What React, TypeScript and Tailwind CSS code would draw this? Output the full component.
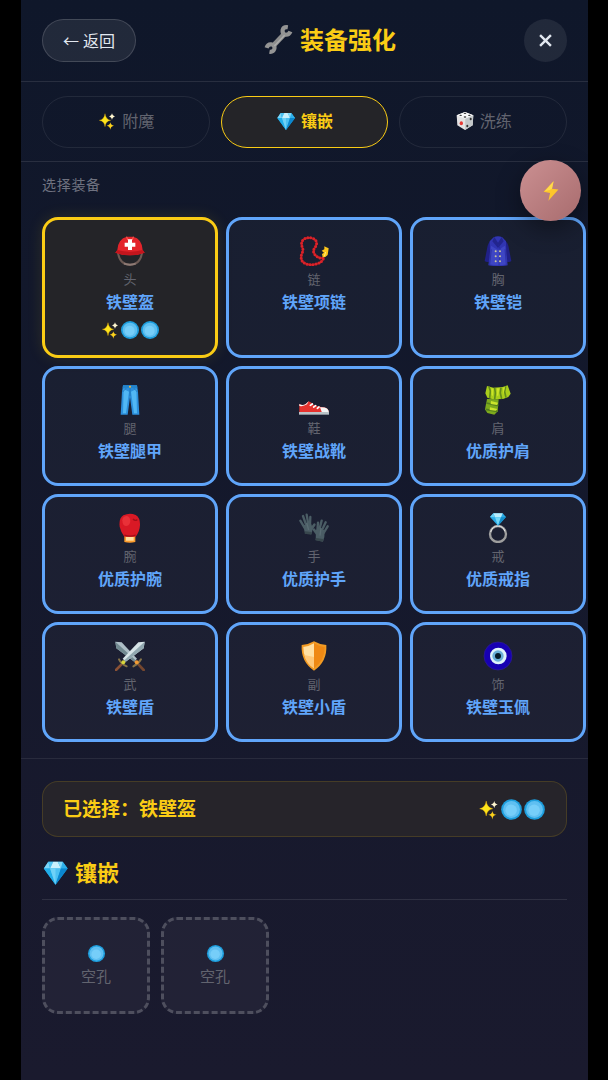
import { useState, type ReactNode } from "react";

function Sparkles({ className }: { className: string }) {
  return (
    <svg viewBox="0 0 60 60" className={className} aria-hidden="true">
      <path d="M24 8Q26 25 41 28Q26 30 24 47Q22 30 7 28Q22 25 24 8Z" fill="#fde41c" stroke="#f4b400" strokeWidth="1" />
      <path d="M45 7Q46 15 54 17Q46 18 45 27Q44 18 36 17Q44 15 45 7Z" fill="#fff6cf" />
      <path d="M40 34Q41 43 51 44Q41 45 40 56Q39 45 29 44Q39 43 40 34Z" fill="#fcd21c" />
    </svg>
  );
}

function Gem({ className }: { className: string }) {
  return (
    <svg viewBox="0 0 60 60" className={className} aria-hidden="true">
      <path d="M14 6H46L57 21L30 57L4 21Z" fill="#1ea7e8" />
      <path d="M14 6L4 21H18Z" fill="#7fd6f7" />
      <path d="M14 6L18 21L25 6Z" fill="#4cc3f2" />
      <path d="M25 6L18 21H42L35 6Z" fill="#c9f1fd" />
      <path d="M46 6L57 21H42Z" fill="#2fb0ea" />
      <path d="M35 6L42 21L46 6Z" fill="#80d8f7" />
      <path d="M4 21H18L30 57Z" fill="#21aeea" />
      <path d="M18 21H42L30 57Z" fill="#4cc1f2" />
      <path d="M42 21H57L30 57Z" fill="#0b87cf" />
      <path d="M18 21H30V57Z" fill="#6fd2f7" />
    </svg>
  );
}

function Socket({ className }: { className: string }) {
  return (
    <svg viewBox="0 0 60 60" className={className} aria-hidden="true">
      <circle cx="30" cy="30" r="27" fill="#1d9edd" />
      <circle cx="30" cy="30" r="22" fill="#5fbff1" />
      <circle cx="29" cy="32" r="15" fill="#76cef9" />
    </svg>
  );
}

function Dice({ className }: { className: string }) {
  return (
    <svg viewBox="0 0 60 60" className={className} aria-hidden="true">
      <path d="M30 3L55 13L53 43L30 57L7 43L5 13Z" fill="#e3e3e3" />
      <path d="M30 3L55 13L31 23L5 13Z" fill="#fafafa" />
      <path d="M31 23L55 13L53 43L30 57Z" fill="#c4c8ca" />
      <ellipse cx="19" cy="37" rx="5" ry="6" fill="#e53935" />
      <g fill="#333">
        <ellipse cx="30" cy="7" rx="4" ry="2" />
        <ellipse cx="17" cy="13" rx="4" ry="2" />
        <ellipse cx="43" cy="13" rx="4" ry="2" />
        <ellipse cx="30" cy="18" rx="4" ry="2" />
        <ellipse cx="47" cy="24" rx="3" ry="4" />
        <ellipse cx="37" cy="45" rx="3" ry="4" />
      </g>
    </svg>
  );
}

function Wrench({ className }: { className: string }) {
  return (
    <svg viewBox="0 0 90 90" className={className} fill="none" aria-hidden="true">
      <path d="M28 65L64 27" stroke="#8d8d8d" strokeWidth="16" />
      <path d="M74 7Q61 5 58 15Q56 26 65 30Q77 32 82 20" stroke="#949494" strokeWidth="13" />
      <path d="M8 71Q12 59 22 60Q35 63 32 74Q28 85 17 83" stroke="#949494" strokeWidth="13" />
      <path d="M32 65L64 32" stroke="#adadad" strokeWidth="4" />
    </svg>
  );
}

function Bolt({ className }: { className: string }) {
  return (
    <svg viewBox="0 0 48 62" className={className} aria-hidden="true">
      <path d="M32 1L1 33L21 37L16 61L47 26L27 24Z" fill="#fdc62b" />
      <path d="M32 1L27 24L20 28L5 32Z" fill="#ffda4d" />
    </svg>
  );
}

// All gear drawings share a 90x90 box
const gearIcons: Record<string, ReactNode> = {
  helmet: (
    <>
      <path d="M9 50Q14 86 45 86Q76 86 81 50" fill="none" stroke="#6d5a54" strokeWidth="6" />
      <path d="M27 83Q45 89 62 83" fill="none" stroke="#8f7b75" strokeWidth="6" />
      <path d="M7 42Q9 8 36 2H54Q81 8 83 42L89 50Q69 58 45 58Q21 58 1 50Z" fill="#e3242b" />
      <path d="M7 42Q45 52 83 42L89 50Q69 58 45 58Q21 58 1 50Z" fill="#c3151d" />
      <path d="M35 2L38 12M55 2L52 12" stroke="#ff6659" strokeWidth="3" />
      <path d="M39 10H51V20H61V32H51V42H39V32H29V20H39Z" fill="#fff" />
    </>
  ),
  beads: (
    <>
      <path
        d="M72 66Q56 68 46 54Q40 43 49 33Q59 16 43 8Q27 1 14 10Q4 19 10 34Q14 43 9 51Q2 70 14 80Q31 90 52 84Q70 79 74 65"
        fill="none"
        stroke="#9c1118"
        strokeWidth="6"
      />
      <path
        d="M72 66Q56 68 46 54Q40 43 49 33Q59 16 43 8Q27 1 14 10Q4 19 10 34Q14 43 9 51Q2 70 14 80Q31 90 52 84Q70 79 74 65"
        fill="none"
        stroke="#d8232a"
        strokeWidth="9"
        strokeLinecap="round"
        strokeDasharray="0 9"
      />
      <path d="M71 64L69 54L75 50L68 44L76 40V31L82 34L89 37L86 57L79 63Z" fill="#fdc61b" />
      <path d="M76 61L80 48" stroke="#fff176" strokeWidth="3" />
    </>
  ),
  coat: (
    <>
      <path d="M29 10Q15 17 12 39L5 75Q10 79 18 77L27 41Z" fill="#202087" />
      <path d="M61 10Q75 17 78 39L85 75Q80 79 72 77L63 41Z" fill="#202087" />
      <path d="M32 4Q45 -3 58 4L69 16L70 47L74 88Q45 93 16 88L21 47L20 16Z" fill="#3035b2" />
      <path d="M24 29L45 42L66 29L72 85Q45 91 19 85Z" fill="#3e46c4" />
      <path d="M34 3L28 16L45 36L62 16L56 3L45 20Z" fill="#22258e" />
      <path d="M45 25L51 37L48 88M25 40L20 86M66 40L70 86" stroke="#252895" strokeWidth="2" fill="none" />
      <g fill="#c9c39c">
        <circle cx="38" cy="46" r="3" />
        <circle cx="51" cy="46" r="3" />
        <circle cx="38" cy="61" r="3" />
        <circle cx="51" cy="61" r="3" />
        <circle cx="38" cy="76" r="3" />
        <circle cx="51" cy="76" r="3" />
      </g>
    </>
  ),
  jeans: (
    <>
      <path d="M24 1H66L69 20L73 89H52L45 36L38 89H17L21 20Z" fill="#2c8fdc" />
      <path d="M26 12L24 85H33L42 20ZM64 12L66 85H57L48 20Z" fill="#51b7f4" />
      <path d="M24 1H66L67 9H23Z" fill="#2384cc" />
      <path d="M45 8V34M23 21L33 10M67 21L57 10" stroke="#176aad" strokeWidth="2" />
      <circle cx="45" cy="5" r="3" fill="#f5b940" />
    </>
  ),
  shoe: (
    <>
      <path d="M1 56Q10 64 20 57L29 49Q39 53 46 61Q62 67 75 67Q89 69 90 85H1Z" fill="#e6322e" />
      <path d="M63 67Q89 65 90 83H69Z" fill="#f5f5f5" />
      <path d="M0 81H90V89H0Z" fill="#b9c2c7" />
      <path d="M1 57Q12 63 21 56L29 49L24 58Q14 65 1 63Z" fill="#f7f7f7" />
      <path d="M34 61L40 57M44 66L50 62M55 70L60 66" stroke="#fff" strokeWidth="5" strokeLinecap="round" />
    </>
  ),
  scarf: (
    <>
      <path d="M12 42L47 43L44 79L34 89L13 84L6 73Z" fill="#7daa1d" />
      <path d="M12 3L31 8L59 6L74 1L78 12L83 26L76 36L60 42L30 43L13 38L7 25Z" fill="#a9ce1b" />
      <path d="M18 5L22 18L20 39M35 9L37 24L35 43M54 8L52 24L56 42M68 4L65 20L69 38" stroke="#628c1b" strokeWidth="5" fill="none" />
      <path d="M10 54L46 62M8 73L42 79" stroke="#557f1d" strokeWidth="5" />
      <path d="M24 48L45 53L42 60L23 57ZM21 67L43 72L38 77L20 75Z" fill="#cbe52b" />
      <path d="M25 9L31 11L30 33L26 30ZM42 10H49L46 32L42 32ZM60 8L66 6L61 30Z" fill="#cce428" />
    </>
  ),
  boxingGlove: (
    <>
      <path d="M28 69H61V87Q45 92 28 87Z" fill="#fb9b2d" />
      <path d="M33 72H56V83H33Z" fill="#ffe0a1" />
      <path d="M25 7Q44 -2 62 6Q76 14 75 37Q74 56 62 71H28Q18 58 14 41Q11 16 25 7Z" fill="#d91925" />
      <path d="M22 22Q22 11 34 9Q44 9 46 23Q46 36 34 39Q23 41 22 22Z" fill="#e93138" />
      <path d="M28 66Q45 73 62 66M54 18Q60 25 67 20" stroke="#a30e18" strokeWidth="4" fill="none" />
    </>
  ),
  gloves: (
    <>
      <g fill="none" stroke="#4b5d65" strokeLinecap="round">
        <path d="M4 23L16 43M12 9L22 37M23 5L28 34M34 12L33 37" strokeWidth="7" />
        <path d="M46 35L37 48" strokeWidth="8" />
        <path d="M86 40L74 60M80 28L68 53M68 23L61 50M57 29L55 54" strokeWidth="7" />
        <path d="M45 50L55 64" strokeWidth="8" />
      </g>
      <path d="M12 37L36 32L42 46L37 64L18 61Z" fill="#4b5d65" />
      <path d="M51 50L77 51L76 72L72 86L50 81Z" fill="#4b5d65" />
      <path d="M18 55L38 57L37 65L17 62ZM51 75L73 78L72 86L49 82Z" fill="#38474d" />
      <path d="M23 30L29 51M66 45L63 68" stroke="#5a6d74" strokeWidth="4" />
    </>
  ),
  ring: (
    <>
      <circle cx="45" cy="63" r="24" fill="none" stroke="#9e9e9e" strokeWidth="7" />
      <path d="M23 57Q28 39 45 39Q60 39 66 55" fill="none" stroke="#e8e8e8" strokeWidth="3" />
      <path d="M31 1H59L69 12L45 38L21 12Z" fill="#29abe6" />
      <path d="M31 1L36 13H54L59 1Z" fill="#b9ecfb" />
      <path d="M21 12L31 1L36 13Z" fill="#68cff4" />
      <path d="M36 13H54L45 38Z" fill="#71d7f8" />
      <path d="M54 13L69 12L45 38Z" fill="#158fcc" />
    </>
  ),
  swords: (
    <>
      <path d="M1 2L20 4L66 53L58 62L4 22Z" fill="#aebfc7" />
      <path d="M1 2L61 57L58 62L4 22Z" fill="#718990" />
      <path d="M19 71L3 87" stroke="#8a5135" strokeWidth="8" strokeLinecap="round" />
      <path d="M71 71L86 87" stroke="#75472f" strokeWidth="8" strokeLinecap="round" />
      <path d="M89 2L70 4L23 53L32 62L86 22Z" fill="#d7e4e7" />
      <path d="M89 2L29 57L32 62L86 22Z" fill="#91a8b0" />
      <path d="M12 55Q18 68 35 76M78 55Q71 68 55 76" stroke="#857349" strokeWidth="6" fill="none" strokeLinecap="round" />
      <circle cx="25" cy="64" r="6" fill="#d7d63c" />
      <circle cx="65" cy="64" r="6" fill="#f29a33" />
    </>
  ),
  shield: (
    <>
      <path d="M45 1Q62 11 82 12Q85 62 45 89Q5 62 8 12Q28 11 45 1Z" fill="#f29b24" />
      <path d="M45 7V82Q12 57 13 18Q31 16 45 7Z" fill="#ffe0a3" />
      <path d="M45 7V82Q78 57 77 18Q59 16 45 7Z" fill="#ef8914" />
      <path d="M16 42Q23 70 45 82V48Z" fill="#ffc878" />
    </>
  ),
  eye: (
    <>
      <circle cx="45" cy="45" r="42" fill="#1700b3" stroke="#30208c" strokeWidth="2" />
      <circle cx="46" cy="45" r="25" fill="#e0f4fb" />
      <circle cx="45" cy="45" r="17" fill="#69afd8" />
      <circle cx="45" cy="45" r="9" fill="#061b29" />
    </>
  ),
};

const tabs = [
  { id: "enchant", icon: <Sparkles className="size-5" />, label: "附魔" },
  { id: "inlay", icon: <Gem className="size-5" />, label: "镶嵌" },
  { id: "refine", icon: <Dice className="size-5" />, label: "洗练" },
];

const equipment = [
  { slot: "头", icon: "helmet", name: "铁壁盔", sockets: 2 },
  { slot: "链", icon: "beads", name: "铁壁项链", sockets: 0 },
  { slot: "胸", icon: "coat", name: "铁壁铠", sockets: 0 },
  { slot: "腿", icon: "jeans", name: "铁壁腿甲", sockets: 0 },
  { slot: "鞋", icon: "shoe", name: "铁壁战靴", sockets: 0 },
  { slot: "肩", icon: "scarf", name: "优质护肩", sockets: 0 },
  { slot: "腕", icon: "boxingGlove", name: "优质护腕", sockets: 0 },
  { slot: "手", icon: "gloves", name: "优质护手", sockets: 0 },
  { slot: "戒", icon: "ring", name: "优质戒指", sockets: 0 },
  { slot: "武", icon: "swords", name: "铁壁盾", sockets: 0 },
  { slot: "副", icon: "shield", name: "铁壁小盾", sockets: 0 },
  { slot: "饰", icon: "eye", name: "铁壁玉佩", sockets: 0 },
];

function Marks({ sockets, size }: { sockets: number; size: string }) {
  if (!sockets) return null;
  return (
    <span className="flex min-h-[21px] items-center">
      <Sparkles className={size} />
      {Array.from({ length: sockets }, (_, i) => (
        <Socket key={i} className={size} />
      ))}
    </span>
  );
}

export default function App() {
  const [tab, setTab] = useState("inlay");
  const [selected, setSelected] = useState("头");
  const current = equipment.find((e) => e.slot === selected) ?? equipment[0];

  return (
    <div className="min-h-screen bg-black pr-5 pl-[21px] font-['Noto_Sans','Noto_Sans_CJK_SC',sans-serif]">
      <div className="relative min-h-screen bg-linear-to-b from-[#0f172a] to-[#1a1a2e]">
        {/* Header */}
        <header className="flex items-center justify-between border-b border-white/10 px-[21px] py-[19px]">
          <button
            type="button"
            className="h-[43px] w-[94px] rounded-full border border-white/15 bg-white/8 text-base text-slate-200"
          >
            ← 返回
          </button>
          <h1 className="flex items-center gap-[7px] pb-[2px] text-2xl leading-9 font-bold text-[#facc15]">
            <Wrench className="size-[29px]" />
            装备强化
          </h1>
          <button
            type="button"
            aria-label="关闭"
            className="flex size-[43px] items-center justify-center rounded-full bg-white/8 text-slate-200"
          >
            <svg viewBox="0 0 12 12" className="size-[13px]" aria-hidden="true">
              <path d="M1 1L11 11M11 1L1 11" stroke="currentColor" strokeWidth="2.2" />
            </svg>
          </button>
        </header>

        {/* Tabs */}
        <nav className="flex gap-[11px] border-b border-white/10 px-[21px] pt-[14px] pb-[13px]">
          {tabs.map((t) => (
            <button
              key={t.id}
              type="button"
              onClick={() => setTab(t.id)}
              className={
                t.id === tab
                  ? "flex h-[52px] flex-1 items-center justify-center gap-[5px] rounded-full border border-[#facc15] bg-[#242428] pb-[2px] text-base font-bold text-[#facc15]"
                  : "flex h-[52px] flex-1 items-center justify-center gap-[5px] rounded-full border border-white/8 pb-[2px] text-base text-[#62646f]"
              }
            >
              {t.icon}
              {t.label}
            </button>
          ))}
        </nav>

        {/* Equipment grid */}
        <section className="border-b border-white/8 px-[21px] pt-3 pb-4">
          <h2 className="mb-[21px] text-sm leading-[22px] tracking-wider text-[#6f7280]">
            选择装备
          </h2>
          {/* Third column runs past the section padding */}
          <div className="-mr-[19px] grid grid-cols-3 gap-2">
            {equipment.map((e) => (
              <button
                key={e.slot}
                type="button"
                onClick={() => setSelected(e.slot)}
                className={
                  e.slot === selected
                    ? "flex flex-col items-center rounded-2xl border-3 border-[#facc15] bg-[#242428] px-2 pt-[14px] pb-[15px] shadow-[0_0_16px_rgba(250,204,21,0.12)]"
                    : "flex flex-col items-center rounded-2xl border-3 border-[#60a5fa] bg-white/3 px-2 pt-[14px] pb-[15px]"
                }
              >
                <span className="flex h-[34px] items-center">
                  <svg viewBox="0 0 90 90" className="size-[30px]" aria-hidden="true">
                    {gearIcons[e.icon]}
                  </svg>
                </span>
                <span className="text-[13px] leading-[22px] text-[#62646f]">{e.slot}</span>
                <span className="mb-[5px] text-base leading-6 font-bold text-[#60a5fa]">
                  {e.name}
                </span>
                <Marks sockets={e.sockets} size="size-5" />
              </button>
            ))}
          </div>
        </section>

        {/* Selected item */}
        <section className="px-[21px] pt-[22px]">
          <div className="flex h-14 items-center justify-between rounded-2xl border border-[#facc15]/15 bg-[#26242a] px-5">
            <span className="text-[19px] font-bold text-[#facc15]">
              已选择：{current.name}
            </span>
            <Marks sockets={current.sockets} size="size-[23px]" />
          </div>

          <h3 className="mt-[19px] flex items-center gap-[6px] border-b border-white/10 pb-[11px] text-[22px] leading-8 font-bold text-[#facc15]">
            <Gem className="size-[27px]" />
            镶嵌
          </h3>

          <div className="mt-[17px] flex gap-[11px]">
            {[1, 2].map((n) => (
              <button
                key={n}
                type="button"
                className="flex h-[97px] w-[108px] flex-col items-center justify-center rounded-2xl border-3 border-dashed border-white/20 bg-white/4 pb-1 text-[15px] text-[#62646f]"
              >
                <span className="flex h-6 items-center">
                  <Socket className="size-[19px]" />
                </span>
                <span className="leading-5">空孔</span>
              </button>
            ))}
          </div>
        </section>

        {/* Floating quick action */}
        <button
          type="button"
          aria-label="快捷操作"
          className="absolute top-40 right-[7px] flex size-[61px] items-center justify-center rounded-full bg-linear-to-br from-[#cb9092] to-[#a86c6e] shadow-[0_8px_24px_rgba(0,0,0,0.4)]"
        >
          <Bolt className="h-5 w-4" />
        </button>
      </div>
    </div>
  );
}
